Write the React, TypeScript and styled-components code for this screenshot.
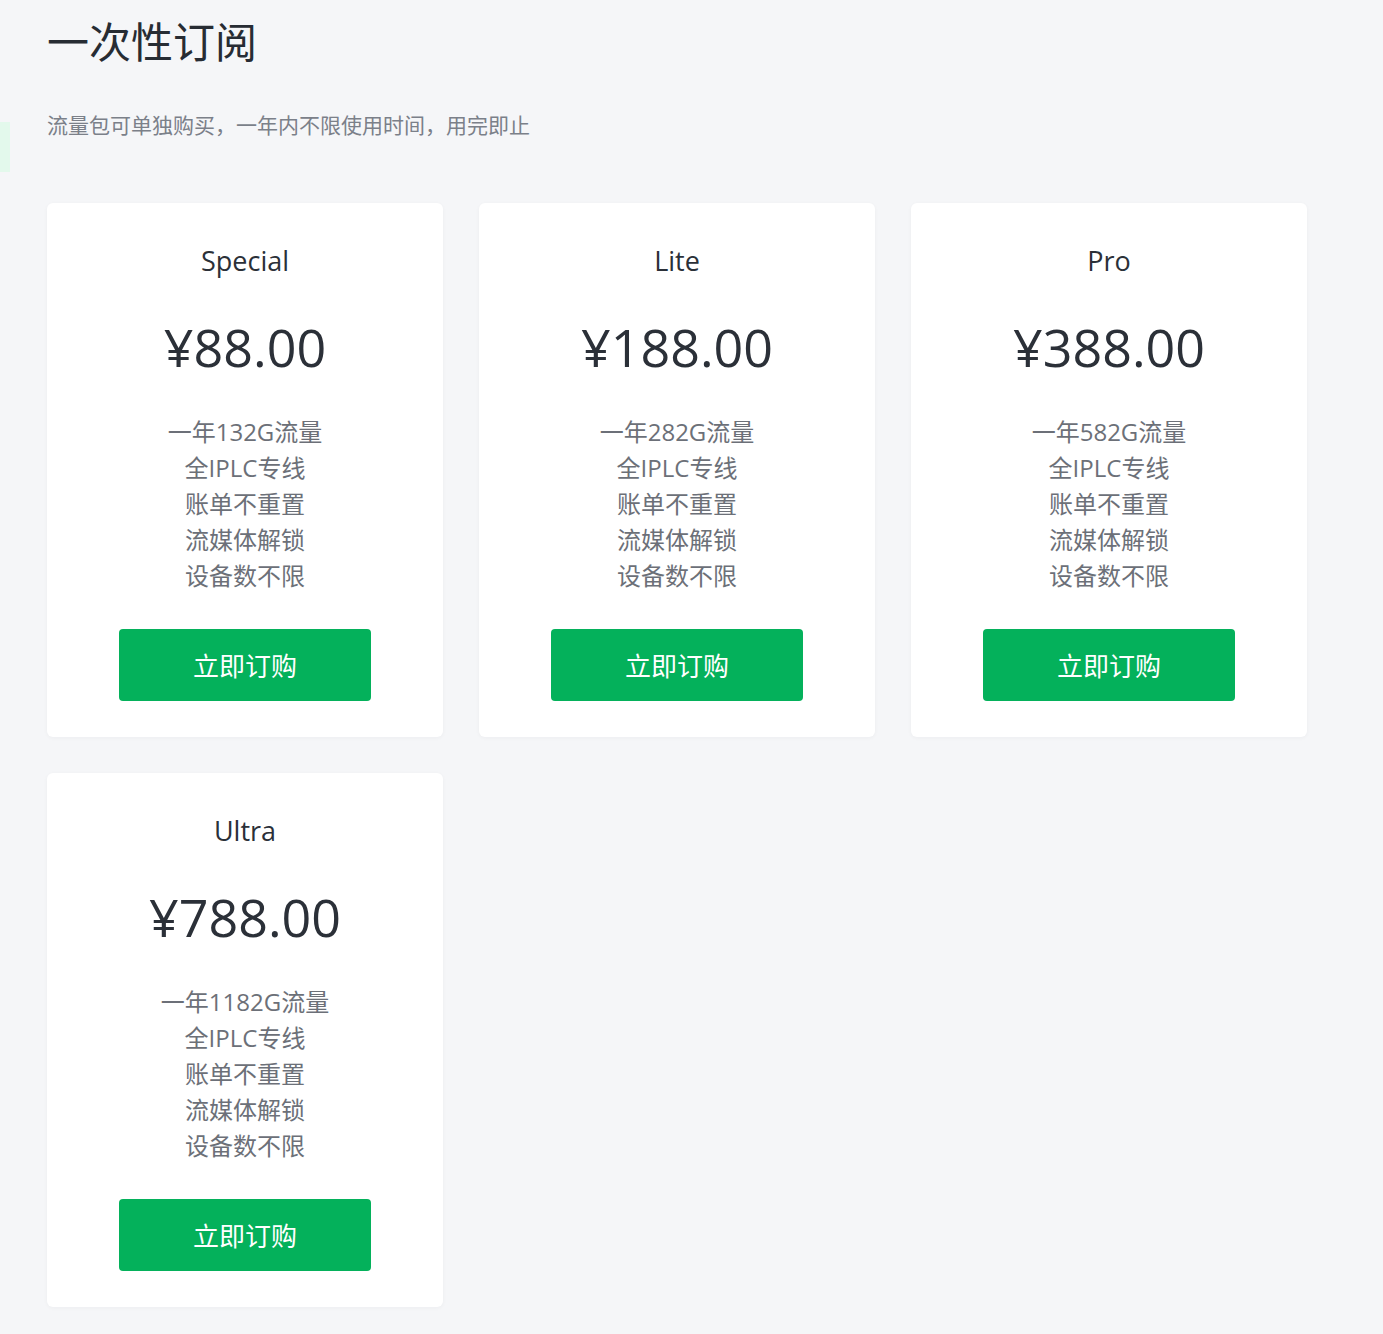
import React from 'react'
import styled, {createGlobalStyle} from 'styled-components'

const GlobalStyle = createGlobalStyle`
  * {
    box-sizing: border-box;
  }
  body {
    margin: 0;
    background-color: #f5f6f8;
    font-family: "Open Sans", "Noto Sans CJK SC", sans-serif;
  }
`

const Page = styled.div`
  min-height: 1334px;
  padding: 16px 47px 40px;
`
const SideTab = styled.div`
  position: fixed;
  left: 0;
  top: 122px;
  width: 10px;
  height: 50px;
  background-color: #e3f9ec;
`
const Title = styled.h1`
  margin: 0;
  font-size: 42px;
  line-height: 52px;
  font-weight: 400;
  color: #272c33;
`
const Subtitle = styled.p`
  margin: 41px 0 0;
  font-size: 21px;
  line-height: 32px;
  color: #7b8089;
`
const Grid = styled.div`
  margin-top: 62px;
  display: grid;
  grid-template-columns: repeat(3, 396px);
  gap: 36px;
`
const Card = styled.div`
  display: flex;
  flex-direction: column;
  align-items: center;
  padding: 36px;
  background-color: #fff;
  border-radius: 6px;
  box-shadow: 0 1px 4px rgba(20, 30, 50, 0.04);
`
const PlanName = styled.div`
  font-size: 27px;
  line-height: 44px;
  color: #2b3038;
`
const Price = styled.div`
  margin-top: 32px;
  font-size: 52px;
  line-height: 64px;
  color: #2b3038;
`
const Features = styled.ul`
  list-style: none;
  margin: 35px 0 0;
  padding: 0;
  text-align: center;
`
const Feature = styled.li`
  font-size: 24px;
  line-height: 36px;
  color: #6c7078;
`
const BuyButton = styled.button`
  margin-top: 35px;
  width: 252px;
  height: 72px;
  border: none;
  border-radius: 4px;
  background-color: #04b15b;
  color: #fff;
  font-family: inherit;
  font-size: 26px;
  cursor: pointer;
`

type Plan = {
  name: string
  price: string
  traffic: string
}

const plans: Plan[] = [
  {name: 'Special', price: '¥88.00', traffic: '一年132G流量'},
  {name: 'Lite', price: '¥188.00', traffic: '一年282G流量'},
  {name: 'Pro', price: '¥388.00', traffic: '一年582G流量'},
  {name: 'Ultra', price: '¥788.00', traffic: '一年1182G流量'},
]

const common = ['全IPLC专线', '账单不重置', '流媒体解锁', '设备数不限']

const App = () => {
  return (
    <Page>
      <GlobalStyle />
      <SideTab />
      <Title>一次性订阅</Title>
      <Subtitle>流量包可单独购买，一年内不限使用时间，用完即止</Subtitle>
      <Grid>
        {plans.map((plan) => (
          <Card key={plan.name}>
            <PlanName>{plan.name}</PlanName>
            <Price>{plan.price}</Price>
            <Features>
              <Feature>{plan.traffic}</Feature>
              {common.map((f) => (
                <Feature key={f}>{f}</Feature>
              ))}
            </Features>
            <BuyButton>立即订购</BuyButton>
          </Card>
        ))}
      </Grid>
    </Page>
  )
}

export default App
